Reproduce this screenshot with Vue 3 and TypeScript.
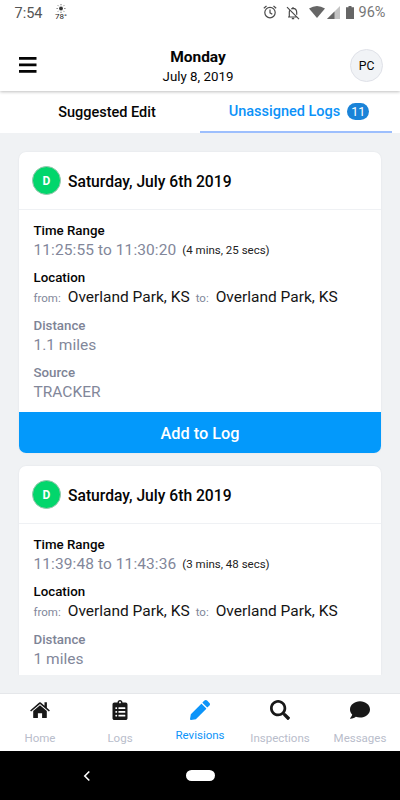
<script setup lang="ts">
interface LogEntry {
  date: string
  range: string
  duration: string
  from: string
  to: string
  distance: string
  source?: string
}

interface NavItem {
  label: string
  icon: string
  viewBox: string
  active?: boolean
}

const logs: LogEntry[] = [
  {
    date: 'Saturday, July 6th 2019',
    range: '11:25:55 to 11:30:20',
    duration: '(4 mins, 25 secs)',
    from: 'Overland Park, KS',
    to: 'Overland Park, KS',
    distance: '1.1 miles',
    source: 'TRACKER',
  },
  {
    date: 'Saturday, July 6th 2019',
    range: '11:39:48 to 11:43:36',
    duration: '(3 mins, 48 secs)',
    from: 'Overland Park, KS',
    to: 'Overland Park, KS',
    distance: '1 miles',
  },
]

const navItems: NavItem[] = [
  {
    label: 'Home',
    viewBox: '0 0 20 20',
    icon: 'M10 5.2 3.2 10.9V17.4Q3.2 18 3.8 18H7.9V13.2H12.1V18H16.2Q16.800 18 16.800 17.400V10.900ZM.1 10.400 9.200 2.600Q10 2 10.800 2.600L14.500 5.800V2.200H16.900V7.800L19.900 10.400 18.900 11.600 10 4 1.100 11.600Z',
  },
  {
    label: 'Logs',
    viewBox: '-64 0 512 512',
    icon: 'M336 64h-80c0-35.300-28.700-64-64-64s-64 28.700-64 64H48C21.500 64 0 85.500 0 112v352c0 26.500 21.500 48 48 48h288c26.500 0 48-21.500 48-48V112c0-26.500-21.500-48-48-48zM96 424c-13.300 0-24-10.700-24-24s10.700-24 24-24 24 10.700 24 24-10.700 24-24 24zm0-96c-13.300 0-24-10.700-24-24s10.700-24 24-24 24 10.700 24 24-10.700 24-24 24zm0-96c-13.300 0-24-10.700-24-24s10.700-24 24-24 24 10.700 24 24-10.700 24-24 24zm96-192c13.300 0 24 10.700 24 24s-10.700 24-24 24-24-10.700-24-24 10.700-24 24-24zm136 368c0 8-3.600 14-8 14H160c-4.400 0-8-6-8-14v-16c0-8 3.600-14 8-14h160c4.400 0 8 6 8 14v16zm0-96c0 8-3.600 14-8 14H160c-4.400 0-8-6-8-14v-16c0-8 3.600-14 8-14h160c4.400 0 8 6 8 14v16zm0-96c0 8-3.600 14-8 14H160c-4.400 0-8-6-8-14v-16c0-8 3.600-14 8-14h160c4.400 0 8 6 8 14v16z',
  },
  {
    label: 'Revisions',
    viewBox: '0 0 512 512',
    active: true,
    icon: 'M497.900 142.100l-46.100 46.100c-4.700 4.700-12.300 4.700-17 0l-111-111c-4.700-4.700-4.700-12.300 0-17l46.100-46.100c18.700-18.700 49.100-18.700 67.900 0l60.100 60.100c18.800 18.700 18.800 49.100 0 67.900zM284.200 99.800L21.600 362.400.4 483.900c-2.900 16.400 11.400 30.600 27.800 27.800l121.500-21.300 262.600-262.600c4.700-4.700 4.700-12.300 0-17l-111-111c-4.800-4.700-12.400-4.700-17.100 0z',
  },
  {
    label: 'Inspections',
    viewBox: '0 0 512 512',
    icon: 'M505 442.700L405.300 343c-4.500-4.500-10.600-7-17-7H372c27.600-35.300 44-79.700 44-128C416 93.100 322.900 0 208 0S0 93.100 0 208s93.100 208 208 208c48.300 0 92.700-16.400 128-44v16.300c0 6.400 2.500 12.500 7 17l99.700 99.700c9.400 9.400 24.600 9.400 33.900 0l28.300-28.300c9.400-9.400 9.400-24.600.1-34zM208 346c-76 0-138-62-138-138 0-76 62-138 138-138 76 0 138 62 138 138 0 76-62 138-138 138z',
  },
  {
    label: 'Messages',
    viewBox: '0 0 512 512',
    icon: 'M256 32C114.600 32 0 125.100 0 240c0 49.600 21.400 95 57 130.700C44.500 421.100 2.700 466 2.200 466.500c-2.200 2.300-2.800 5.700-1.500 8.700S4.800 480 8 480c66.300 0 116-31.800 140.600-51.400 32.700 12.300 69 19.400 107.400 19.400 141.400 0 256-93.100 256-208S397.400 32 256 32z',
  },
]
</script>

<template>
  <div class="screen">
    <div class="status">
      <span class="clock">7:54</span>
      <div class="weather">
        <svg width="10" height="9" viewBox="0 0 10 9">
          <circle cx="5" cy="4.500" r="1.900" fill="#333" />
          <path d="M5 0v1.300M5 7.700V9M.5 4.500h1.300M8.200 4.500h1.300M1.800 1.300l.9.900M7.300 6.800l.9.900M8.200 1.300l-.9.900M2.700 6.800l-.9.900" stroke="#555" stroke-width=".8" />
        </svg>
        <span>78°</span>
      </div>
      <div class="status-icons">
        <svg class="alarm" width="14" height="14" viewBox="0 0 14 14" fill="none" stroke="#4a4a4a" stroke-width="1.200">
          <circle cx="7" cy="7.600" r="5.200" />
          <path d="M7 4.500v3.300l2.300 1.400M.8 3.200 3.500 1M13.200 3.200 10.500 1" />
        </svg>
        <svg class="bell" width="14" height="14" viewBox="0 0 14 14" fill="none" stroke="#4a4a4a" stroke-width="1.200">
          <path d="M1 1.200 13 13.200M2 11h8.800M3.300 11V6q0-1.300.7-2.200M5.300 2.900Q6 2.400 7 2.400q3.700.2 3.700 4v2.300M7 1v1.400" />
          <path d="M5.800 12.500h2.400" stroke-width="1.500" />
        </svg>
        <svg class="wifi" width="16" height="12" viewBox="0 0 16 12">
          <path d="M0 2.600Q8-2.500 16 2.600L8 12Z" fill="#666" />
        </svg>
        <svg class="signal" width="13" height="13" viewBox="0 0 13 13">
          <path d="M13 0v13H0Z" fill="#c4c4c4" />
          <path d="M7.500 5.500V13H0Z" fill="#666" />
        </svg>
        <svg class="battery" width="8" height="13" viewBox="0 0 8 13">
          <path d="M2.500 0h3v1.300H8V13H0V1.300h2.500Z" fill="#666" />
        </svg>
        <span class="percent">96%</span>
      </div>
    </div>

    <header class="header">
      <button class="menu" aria-label="Menu">
        <svg width="18" height="16" viewBox="0 0 18 16"><path d="M0 1.400h17.500M0 7.900h17.500M0 14.400h17.500" stroke="#050505" stroke-width="2.700" /></svg>
      </button>
      <div class="heading">
        <h1>Monday</h1>
        <p>July 8, 2019</p>
      </div>
      <div class="avatar">PC</div>
    </header>

    <div class="tabs">
      <div class="tab"><span>Suggested Edit</span></div>
      <div class="tab selected"><span>Unassigned Logs</span><b class="count">11</b></div>
    </div>

    <main class="list">
      <article v-for="(log, index) in logs" :key="index" class="card">
        <div class="card-head">
          <span class="duty">D</span>
          <h2>{{ log.date }}</h2>
        </div>
        <dl class="details">
          <dt>Time Range</dt>
          <dd class="range"><span>{{ log.range }}</span><span class="duration">{{ log.duration }}</span></dd>
          <dt>Location</dt>
          <dd class="places">
            <small>from:</small><span class="place">{{ log.from }}</span>
            <small>to:</small><span class="place">{{ log.to }}</span>
          </dd>
          <dt class="muted">Distance</dt>
          <dd>{{ log.distance }}</dd>
          <template v-if="log.source">
            <dt class="muted">Source</dt>
            <dd>{{ log.source }}</dd>
          </template>
        </dl>
        <button v-if="log.source" class="add">Add to Log</button>
      </article>
    </main>

    <nav class="nav">
      <div v-for="item in navItems" :key="item.label" class="nav-item" :class="{ active: item.active }">
        <svg width="20" height="20" :viewBox="item.viewBox"><path :d="item.icon" fill="currentColor" fill-rule="evenodd" /></svg>
        <span>{{ item.label }}</span>
      </div>
    </nav>

    <div class="system">
      <svg class="back" width="8" height="12" viewBox="0 0 8 12"><path d="M6.300 1.500 1.800 6l4.500 4.500" fill="none" stroke="#fff" stroke-width="1.600" /></svg>
      <span class="pill"></span>
    </div>
  </div>
</template>

<style>
body {
  background: #f0f2f4;
}
</style>

<style scoped>
* {
  box-sizing: border-box;
}
.screen {
  width: 400px;
  height: 800px;
  display: flex;
  flex-direction: column;
  overflow: hidden;
  background: #f0f2f4;
  color: #050505;
  font-family: Roboto, "Liberation Sans", sans-serif;
}
h1, h2, p, dl, dd {
  margin: 0;
}
button {
  border: 0;
  padding: 0;
  font-family: inherit;
}
svg {
  display: block;
  flex: none;
}
.status {
  height: 40px;
  flex: none;
  display: flex;
  background: #fff;
  padding-left: 14.500px;
}
.clock {
  width: 40px;
  padding-top: 5px;
  font-size: 14.500px;
  line-height: 18px;
  color: #555;
}
.weather {
  width: 13px;
  padding-top: 4px;
  display: flex;
  flex-direction: column;
  align-items: center;
  font-size: 8px;
  line-height: 8px;
  color: #222;
}
.status-icons {
  display: flex;
  align-items: flex-start;
  padding-top: 6px;
  margin-left: 195px;
}
.alarm { margin-top: -1px; }
.bell { margin-left: 9px; }
.wifi { margin-left: 9px; }
.signal { margin-left: 2px; }
.battery { margin-left: 6px; }
.percent {
  margin: -2px 0 0 5px;
  font-size: 14.500px;
  line-height: 18px;
  color: #777;
}
.header {
  height: 51px;
  flex: none;
  display: flex;
  align-items: center;
  background: #fff;
  padding: 0 17px 0 19px;
  box-shadow: 0 1px 3px rgba(0, 0, 0, 0.25);
  clip-path: inset(0 0 -5px 0);
  z-index: 1;
}
.menu {
  width: 18px;
  margin-bottom: 1px;
  background: none;
}
.heading {
  width: 313px;
  padding: 2px 0 0 9px;
  text-align: center;
}
.heading h1 {
  font-size: 15.500px;
  font-weight: 700;
  line-height: 19px;
}
.heading p {
  font-size: 13.300px;
  line-height: 19px;
}
.avatar {
  width: 33px;
  height: 33px;
  flex: none;
  border: 1px solid #dfe1e8;
  border-radius: 50%;
  background: #f1f3f6;
  display: flex;
  align-items: center;
  justify-content: center;
  font-size: 12.200px;
}
.tabs {
  height: 42px;
  flex: none;
  display: flex;
  padding: 0 8px 0 14px;
  background: #fff;
}
.tab {
  width: 186px;
  display: flex;
  align-items: center;
  justify-content: center;
  font-size: 14.500px;
  font-weight: 500;
  padding-top: 1px;
}
.tab.selected {
  width: 192px;
  color: #0c92f8;
  border-bottom: 2px solid #9dbffd;
  padding: 0 0 0 6px;
}
.count {
  width: 22px;
  height: 17px;
  border-radius: 9px;
  background: #1a83d8;
  color: #fff;
  font-size: 12.500px;
  font-weight: 400;
  line-height: 18px;
  text-align: center;
  margin-left: 7px;
}
.list {
  height: 542px;
  flex: none;
  overflow: hidden;
  padding: 19px 19px 0;
}
.card {
  width: 362px;
  height: 301px;
  margin-bottom: 13px;
  border-radius: 7px;
  background: #fff;
  overflow: hidden;
  box-shadow: 0 0 2px rgba(30, 40, 60, 0.080);
}
.card:last-child {
  height: 209px;
  margin-bottom: 0;
  border-radius: 7px 7px 0 0;
}
.card-head {
  height: 58px;
  display: flex;
  align-items: center;
  padding-left: 13px;
  border-bottom: 1px solid #eff1f4;
}
.duty {
  width: 29px;
  height: 29px;
  border-radius: 50%;
  border: 1px solid #9bc5ae;
  background: #02d66c;
  color: #fff;
  font-size: 12px;
  font-weight: 700;
  line-height: 28px;
  text-align: center;
  margin-right: 7px;
}
.card h2 {
  padding-top: 1px;
  font-size: 15.650px;
  font-weight: 500;
}
.details {
  height: 202px;
  padding: 11px 0 0 14.500px;
}
.details dt {
  height: 19px;
  font-size: 13.300px;
  font-weight: 500;
  line-height: 19px;
}
.details dt.muted {
  color: #7e8496;
}
.details dd {
  height: 20px;
  font-size: 15.500px;
  line-height: 20px;
  margin-bottom: 8.400px;
  color: #82879a;
  white-space: nowrap;
}
.range {
  display: flex;
  align-items: flex-start;
  letter-spacing: 0.090px;
}
.duration {
  font-size: 11.500px;
  letter-spacing: 0;
  color: #222;
  margin-left: 6px;
}
.places {
  display: flex;
  align-items: baseline;
}
.places small {
  font-size: 11.500px;
}
.place {
  color: #151515;
  margin: 0 6px 0 7px;
}
.add {
  display: block;
  width: 100%;
  height: 41px;
  padding-top: 2px;
  background: #0399fb;
  color: #fff;
  font-size: 16.300px;
  font-weight: 500;
}
.nav {
  margin-top: 18px;
  height: 58px;
  flex: none;
  display: flex;
  background: #fff;
  border-top: 1px solid #e5e7ea;
}
.nav-item {
  width: 80px;
  display: flex;
  flex-direction: column;
  align-items: center;
  padding-top: 6px;
  color: #181818;
}
.nav-item span {
  margin-top: 10px;
  font-size: 11.500px;
  line-height: 16px;
  color: #b9bdcb;
}
.nav-item.active,
.nav-item.active span {
  color: #0c94f9;
}
.nav-item.active span {
  margin-top: 7px;
}
.system {
  height: 49px;
  flex: none;
  display: flex;
  align-items: center;
  background: #000;
  padding-left: 83px;
}
.pill {
  width: 29px;
  height: 11px;
  border-radius: 6px;
  background: #fff;
  margin-left: 95px;
}
</style>
